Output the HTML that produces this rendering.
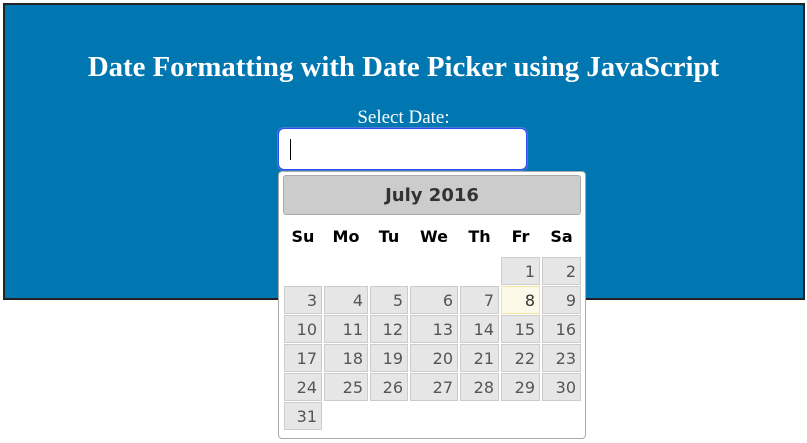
<!DOCTYPE html>
<html><head><style>
body{margin:0;width:807px;height:443px;background:#fff;position:relative;overflow:hidden;font-family:"Liberation Serif",serif}
.box{position:absolute;left:3px;top:3px;width:798px;height:293px;border:2px solid #222;background:#0077b1}
h1{position:absolute;left:0;top:50px;width:807px;margin:0;text-align:center;color:#fff;font-size:28.8px;font-weight:bold;line-height:34px}
.lbl{position:absolute;left:0;top:107px;width:807px;text-align:center;color:#fff;font-size:19px}
.inp{position:absolute;left:278px;top:128px;width:247px;height:40px;border:1px solid #2a4cf0;border-radius:6px;background:#fff;box-shadow:0 0 0 1px #4a7ad8}
.caret{position:absolute;left:11px;top:10px;width:1px;height:21px;background:#000}
.dp{position:absolute;left:278px;top:171px;width:306px;height:266px;border:1px solid #aaa;border-radius:4px;background:#fff;font-family:"DejaVu Sans",sans-serif}
.hd{position:absolute;left:4px;top:3px;width:296px;height:38px;border:1px solid #aaa;border-radius:3px;background:#ccc;text-align:center;line-height:40px;font-weight:bold;font-size:18px;color:#333}
.dn{position:absolute;top:55px;font-weight:bold;font-size:16px;color:#000;text-align:center}
.c{position:absolute;border:1px solid #ccc;background:#e6e6e6;color:#555;font-size:16px;text-align:right;line-height:27px;box-sizing:border-box;height:28px;padding-right:4px}
.t{background:#fcf9e8;border-color:#f0e2a0;color:#333}
</style></head><body>
<div class="box"></div>
<h1>Date Formatting with Date Picker using JavaScript</h1>
<div class="lbl">Select Date:</div>
<div class="inp"><div class="caret"></div></div>
<div class="dp">
<div class="hd">July 2016</div>
<div id="g"></div>
</div>
<script>
var xs=[5,45,91,131,181,222,263],ws=[38,44,38,48,39,39,39],names=["Su","Mo","Tu","We","Th","Fr","Sa"];
var dp=document.querySelector('.dp'),h='';
for(var i=0;i<7;i++)h+='<div class="dn" style="left:'+xs[i]+'px;width:'+ws[i]+'px">'+names[i]+'</div>';
var rows=[85,114,143,172,201,230];
for(var d=1;d<=31;d++){var p=d+4,r=Math.floor(p/7),c=p%7;
h+='<div class="c'+(d==8?' t':'')+'" style="left:'+xs[c]+'px;top:'+rows[r]+'px;width:'+ws[c]+'px">'+d+'</div>';}
dp.insertAdjacentHTML('beforeend',h);
</script>
</body></html>
